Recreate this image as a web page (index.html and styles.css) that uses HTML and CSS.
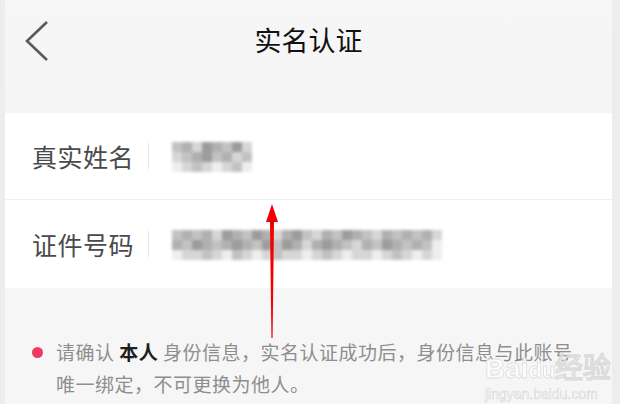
FILE: index.html
```html
<!DOCTYPE html>
<html lang="zh-CN">
<head>
    <meta charset="UTF-8">
    <meta name="viewport" content="width=device-width, initial-scale=1.0">
    <title>实名认证</title>
    <link rel="stylesheet" href="styles.css">
</head>
<body>

    <div class="frame">
        <div class="edge edge-left"></div>

        <div class="screen">
            <!-- Nav bar -->
            <header class="nav">
                <svg class="back" width="26" height="42" viewBox="0 0 26 42">
                    <polyline points="23,2 3,21 23,40" fill="none" stroke="#5a5a5a" stroke-width="2.6"/>
                </svg>
                <h1>实名认证</h1>
            </header>

            <!-- Form -->
            <div class="form">
                <div class="row">
                    <span class="label">真实姓名</span>
                    <span class="sep"></span>
                    <div class="mosaic short">
                        <i class="c2"></i><i class="c3"></i><i class="c1"></i><i class="c4"></i><i class="c3"></i><i class="c2"></i><i class="c4"></i><i class="c1"></i>
                        <i class="c1"></i><i class="c2"></i><i class="c3"></i><i class="c4"></i><i class="c2"></i><i class="c3"></i><i class="c1"></i><i class="c2"></i>
                        <i class="c0"></i><i class="c1"></i><i class="c2"></i><i class="c1"></i><i class="c0"></i><i class="c1"></i><i class="c2"></i><i class="c0"></i>
                    </div>
                </div>
                <div class="row">
                    <span class="label">证件号码</span>
                    <span class="sep"></span>
                    <div class="mosaic long">
                        <i class="c2"></i><i class="c3"></i><i class="c2"></i><i class="c3"></i><i class="c1"></i><i class="c4"></i><i class="c3"></i><i class="c2"></i><i class="c4"></i><i class="c3"></i><i class="c1"></i><i class="c3"></i><i class="c4"></i><i class="c2"></i><i class="c1"></i><i class="c3"></i><i class="c2"></i><i class="c4"></i><i class="c3"></i><i class="c2"></i><i class="c1"></i><i class="c3"></i><i class="c2"></i><i class="c3"></i><i class="c2"></i><i class="c3"></i><i class="c1"></i>
                        <i class="c3"></i><i class="c2"></i><i class="c4"></i><i class="c3"></i><i class="c2"></i><i class="c3"></i><i class="c4"></i><i class="c3"></i><i class="c2"></i><i class="c4"></i><i class="c2"></i><i class="c4"></i><i class="c3"></i><i class="c1"></i><i class="c3"></i><i class="c4"></i><i class="c3"></i><i class="c2"></i><i class="c1"></i><i class="c3"></i><i class="c2"></i><i class="c4"></i><i class="c3"></i><i class="c2"></i><i class="c3"></i><i class="c2"></i><i class="c0"></i>
                        <i class="c0"></i><i class="c1"></i><i class="c1"></i><i class="c2"></i><i class="c1"></i><i class="c0"></i><i class="c2"></i><i class="c1"></i><i class="c0"></i><i class="c1"></i><i class="c2"></i><i class="c1"></i><i class="c1"></i><i class="c0"></i><i class="c1"></i><i class="c2"></i><i class="c1"></i><i class="c0"></i><i class="c1"></i><i class="c1"></i><i class="c0"></i><i class="c1"></i><i class="c2"></i><i class="c1"></i><i class="c0"></i><i class="c1"></i><i class="c0"></i>
                    </div>
                </div>
            </div>

            <!-- Notice -->
            <div class="notice">
                <span class="dot"></span>
                <p>请确认 <b>本人</b> 身份信息，实名认证成功后，身份信息与此账号<br>唯一绑定，不可更换为他人。</p>
            </div>

            <!-- Annotation arrow -->
            <svg class="arrow" width="16" height="136" viewBox="0 0 16 136">
                <polygon points="8,0 14,18 10,18 8.6,134 7.4,134 6,18 2,18" fill="#f50000"/>
            </svg>

            <!-- Watermark -->
            <div class="watermark">
                <div class="wm-logo">Bai<span class="wm-du">du</span>经验</div>
                <div class="wm-url">jingyan.baidu.com</div>
            </div>
        </div>

        <div class="edge edge-right"></div>
    </div>

</body>
</html>
```

FILE: styles.css
```css
body {
    margin: 0;
    padding: 0;
    font-family: "Noto Sans CJK SC", "Noto Sans", sans-serif;
    background-color: #f5f5f5;
}
.frame {
    display: flex;
    width: 620px;
    height: 404px;
    overflow: hidden;
}
.edge {
    background-color: #ededed;
}
.edge-left {
    width: 5px;
}
.edge-right {
    width: 8px;
}
.screen {
    flex: 1;
    position: relative;
    background-color: #f6f6f6;
    display: flex;
    flex-direction: column;
}
.nav {
    height: 113px;
    position: relative;
    display: flex;
    justify-content: center;
    background: linear-gradient(to bottom, #f6f6f6, #f5f5f5);
}
.nav h1 {
    margin: 0;
    margin-top: 22px;
    font-size: 27px;
    font-weight: 400;
    line-height: 36px;
    color: #111;
}
.back {
    position: absolute;
    left: 19px;
    top: 20px;
}
.form {
    background-color: #fff;
}
.row {
    height: 86px;
    display: flex;
    align-items: center;
    border-bottom: 1px solid #f0f0f0;
}
.row + .row {
    height: 88px;
    border-bottom: none;
}
.label {
    margin-left: 27px;
    font-size: 25px;
    color: #4a4a4a;
    letter-spacing: 0.5px;
}
.sep {
    width: 1px;
    height: 26px;
    margin-left: 14px;
    margin-right: 23px;
    background-color: #e6e6e6;
}
.mosaic {
    display: grid;
    grid-template-rows: repeat(3, 10px);
    filter: blur(1.4px);
}
.mosaic.short {
    grid-template-columns: repeat(8, 10px);
    margin-top: 2px;
}
.mosaic.long {
    grid-template-columns: repeat(27, 10px);
    margin-top: 2px;
}
.mosaic i {
    display: block;
}
.c0 { background-color: #eeeeee; }
.c1 { background-color: #d6d6d6; }
.c2 { background-color: #c2c2c2; }
.c3 { background-color: #b0b0b0; }
.c4 { background-color: #9c9c9c; }
.notice {
    display: flex;
    align-items: flex-start;
    padding: 48px 20px 0 27px;
}
.dot {
    flex: none;
    width: 11px;
    height: 11px;
    margin-top: 11px;
    margin-right: 13px;
    border-radius: 50%;
    background-color: #ee3a63;
}
.notice p {
    margin: 0;
    font-size: 19px;
    line-height: 32px;
    letter-spacing: 0.5px;
    color: #8e8e8e;
    white-space: nowrap;
}
.notice b {
    color: #1e1e1e;
    font-weight: 700;
}
.arrow {
    position: absolute;
    left: 259px;
    top: 204px;
}
.watermark {
    position: absolute;
    left: 480px;
    top: 354px;
    color: #fff;
    font-family: "Liberation Sans", sans-serif;
    opacity: 0.85;
}
.wm-logo {
    font-size: 28px;
    font-weight: 700;
    line-height: 30px;
    -webkit-text-stroke: 0.8px #d8d8d8;
}
.wm-du {
    font-size: 22px;
}
.wm-url {
    font-size: 14px;
    line-height: 16px;
    -webkit-text-stroke: 0.6px #d0d0d0;
}
```
